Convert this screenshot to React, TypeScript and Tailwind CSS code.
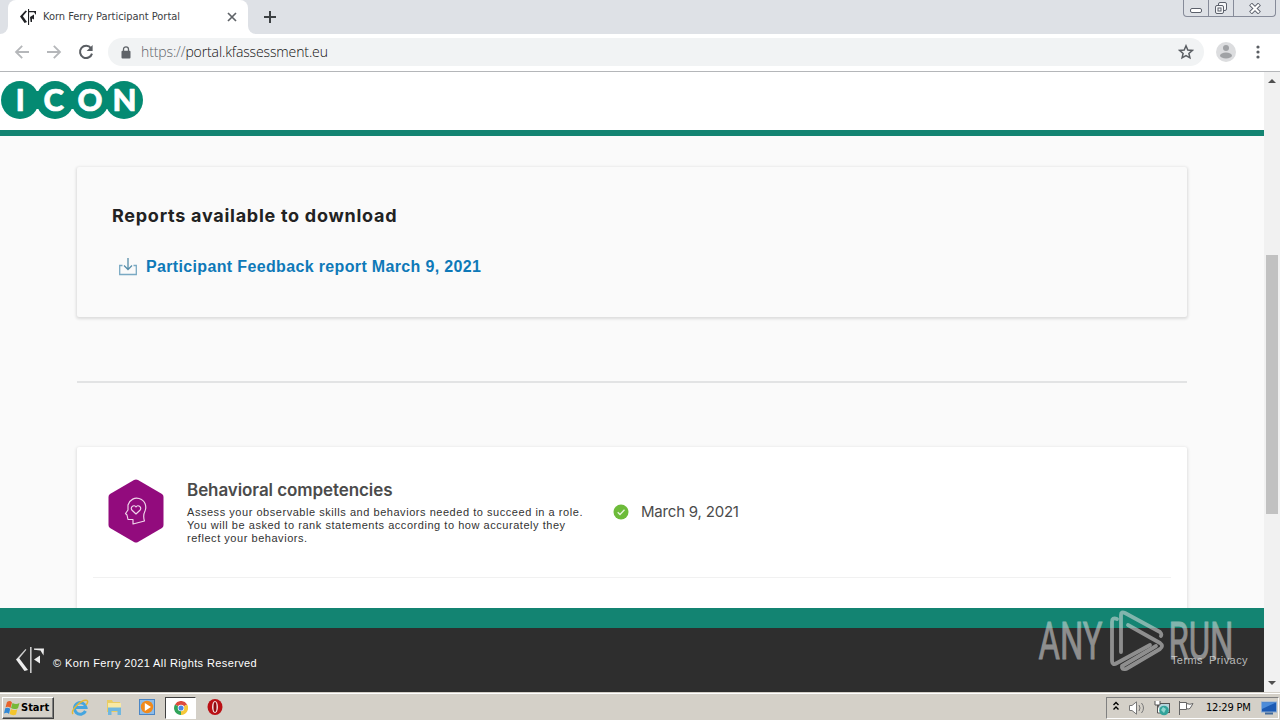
import React from "react";

const KfMark = ({ className, color }: { className: string; color: string }) => (
  <svg viewBox="0 0 28 26" className={className} fill={color}>
    <path d="M0 12.5 L3 11 L12 23 L8.5 24 Z" />
    <path d="M0 12.5 L9.5 2 L10.4 2.8 L2.4 12.5 Z" opacity="0.85" />
    <rect x="14" y="0" width="1.6" height="26" opacity="0.8" />
    <path d="M18 1.5 H28 L27.5 8.5 L24.5 3.4 L18 2.7 Z" />
    <path d="M18 12.5 L24 8.5 V16.5 Z" />
  </svg>
);

const TabMark = () => (
  <svg viewBox="0 0 16 16" className="h-4 w-4" fill="#202124">
    <path d="M0 7.5 L2.4 6.5 L7 13 L4.6 14 Z" />
    <path d="M0 7.5 L5.5 1.5 L7 2.3 L2.2 8 Z" />
    <rect x="8" y="0" width="1.1" height="16" />
    <path d="M9 2 H16 V6 L14 3.2 H9 Z" />
    <path d="M10 8 L14 5.5 V10.5 L12 9.5 V13 H10.6 Z" />
  </svg>
);

const TabStrip = () => (
  <div className="relative flex h-[34px] bg-[#dee1e6] pl-2">
    <div className="absolute bottom-0 left-0 h-2 w-2 bg-white">
      <div className="h-2 w-2 rounded-br-lg bg-[#dee1e6]" />
    </div>
    <div className="flex h-[34px] w-60 items-center rounded-t-lg bg-white pl-3 pr-[10px]">
      <TabMark />
      <span className="ml-[7px] mt-px flex-1 whitespace-nowrap font-['DejaVu_Sans_Condensed','DejaVu_Sans',sans-serif] text-[11px] tracking-[-0.03px] text-[#3c4043]">
        Korn Ferry Participant Portal
      </span>
      <svg viewBox="0 0 12 12" className="h-3 w-3" stroke="#5f6368" strokeWidth="1.7">
        <path d="M2 2 L10 10 M10 2 L2 10" />
      </svg>
    </div>
    <div className="mt-[26px] h-2 w-2 bg-white">
      <div className="h-2 w-2 rounded-bl-lg bg-[#dee1e6]" />
    </div>
    <svg viewBox="0 0 14 14" className="ml-[7px] mt-[10px] h-[14px] w-[14px]" stroke="#3c4043" strokeWidth="2">
      <path d="M7 1 V13 M1 7 H13" />
    </svg>
    <div className="ml-auto mr-1 flex h-[17px] w-[93px] rounded-b-[4px] border border-t-0 border-[#868b99]">
      <div className="flex w-[25px] items-end justify-center border-r border-[#868b99] pb-[3px]">
        <div className="h-[5px] w-3 rounded-[2px] border border-[#5b606b] bg-white" />
      </div>
      <div className="flex w-[25px] justify-center border-r border-[#868b99] pt-[2px]">
        <svg viewBox="0 0 14 13" className="h-[13px] w-[14px]" fill="#f6f7f9" stroke="#5b606b">
          <rect x="4.5" y="0.5" width="8" height="8" rx="1.5" />
          <rect x="1.5" y="3.5" width="8" height="8" rx="1.5" />
          <rect x="4" y="6" width="3" height="3" />
        </svg>
      </div>
      <div className="flex flex-1 justify-center pt-[3px]">
        <svg viewBox="0 0 12 11" className="h-[11px] w-3">
          <path d="M1.5 1 L10.5 10 M10.5 1 L1.5 10" stroke="#5b606b" strokeWidth="4" />
          <path d="M2 1.5 L10 9.5 M10 1.5 L2 9.5" stroke="#fff" strokeWidth="2.2" />
        </svg>
      </div>
    </div>
  </div>
);

const Toolbar = () => (
  <div className="flex h-[38px] items-center border-b border-[#b4b6b9] bg-white pb-px pl-[14px] pr-3">
    <svg viewBox="0 0 16 16" className="h-4 w-4" fill="none" stroke="#b5b7ba" strokeWidth="1.8">
      <path d="M15 8 H2 M8.2 1.8 L2 8 L8.2 14.2" />
    </svg>
    <svg viewBox="0 0 16 16" className="ml-4 h-4 w-4" fill="none" stroke="#b5b7ba" strokeWidth="1.8">
      <path d="M1 8 H14 M7.8 1.8 L14 8 L7.8 14.2" />
    </svg>
    <svg viewBox="0 0 16 16" className="ml-4 h-4 w-4" fill="none" stroke="#5a5e63" strokeWidth="2">
      <path d="M13 4.2 A6.1 6.1 0 1 0 14 9.6" />
      <path d="M14.6 1 V7 H8.6 Z" fill="#5a5e63" stroke="none" />
    </svg>
    <div className="ml-[14px] flex h-7 w-[1096px] items-center rounded-full bg-[#f1f3f4] pl-[13px] pr-[10px]">
      <svg viewBox="0 0 10 13" className="h-[13px] w-[10px]" fill="#5f6368">
        <rect x="0.5" y="4.7" width="9" height="7.8" rx="1" />
        <path d="M2.5 5 V3.3 A2.5 2.5 0 0 1 7.5 3.3 V5" fill="none" stroke="#5f6368" strokeWidth="1.3" />
      </svg>
      <span className="ml-[10px] flex-1 font-['Open_Sans',sans-serif] text-sm font-light tracking-[-0.12px] text-[#111]">
        <span className="text-[#5f6368]">https://</span>
        portal.kfassessment.eu
      </span>
      <svg viewBox="0 0 16 16" className="h-4 w-4" fill="none" stroke="#5a5e63" strokeWidth="1.5">
        <path d="M8 1.8 L9.8 6 L14.3 6.4 L10.9 9.4 L11.9 13.8 L8 11.5 L4.1 13.8 L5.1 9.4 L1.7 6.4 L6.2 6 Z" />
      </svg>
    </div>
    <svg viewBox="0 0 20 20" className="ml-3 h-5 w-5">
      <circle cx="10" cy="10" r="10" fill="#dcdddf" />
      <circle cx="10" cy="6" r="3" fill="#a0a2a5" />
      <ellipse cx="10" cy="13.5" rx="6" ry="3" fill="#a0a2a5" />
    </svg>
    <svg viewBox="0 0 4 16" className="ml-5 h-4 w-1" fill="#5a5e63">
      <circle cx="2" cy="3" r="1.6" />
      <circle cx="2" cy="8" r="1.6" />
      <circle cx="2" cy="13" r="1.6" />
    </svg>
  </div>
);

const IconLogo = () => (
  <svg viewBox="0 0 144 40" className="h-10 w-36">
    <g fill="#048a72">
      <circle cx="20" cy="20" r="19" />
      <circle cx="55" cy="20" r="19" />
      <circle cx="90" cy="20" r="19" />
      <circle cx="124" cy="20" r="19" />
      <rect x="33" y="11" width="9" height="18" />
      <rect x="68" y="11" width="9" height="18" />
      <rect x="103" y="11" width="9" height="18" />
    </g>
    <g
      fill="#fff"
      stroke="#fff"
      strokeWidth="0.7"
      strokeLinejoin="round"
      fontFamily="Lato, sans-serif"
      fontWeight="900"
      fontSize="29.5"
    >
      <text x="15.8" y="30.5">I</text>
      <text x="43.5" y="30.5" textLength="20.5" lengthAdjust="spacingAndGlyphs">C</text>
      <text x="77.5" y="30.5" textLength="25" lengthAdjust="spacingAndGlyphs">O</text>
      <text x="112.5" y="30.5" textLength="24" lengthAdjust="spacingAndGlyphs">N</text>
    </g>
  </svg>
);

const Reports = () => (
  <section className="h-[150px] rounded-[2px] bg-[#fafafa] pl-[35px] pt-[35px] shadow-[0_1px_3px_1px_rgba(0,0,0,0.12)]">
    <h2 className="whitespace-nowrap font-[Inter,sans-serif] text-lg leading-7 font-bold tracking-[0.73px] text-[#222]">
      Reports available to download
    </h2>
    <a className="mt-[23px] flex h-7 items-center pl-[7px] text-[#0e79b8]">
      <svg viewBox="0 0 18 18" className="h-[18px] w-[18px]" fill="none" stroke="#79a9c3" strokeWidth="1.3">
        <path d="M3.5 7.5 H0.7 V16.5 H17.3 V7.5 H14.5" />
        <path d="M9 0 V11.5 M5 7.5 L9 11.5 L13 7.5" stroke="#568da9" />
      </svg>
      <span className="ml-[9px] whitespace-nowrap text-base font-bold tracking-[0.35px]">
        Participant Feedback report March 9, 2021
      </span>
    </a>
  </section>
);

const Competencies = () => (
  <section className="h-[220px] rounded-[2px] bg-white px-4 shadow-[0_1px_3px_1px_rgba(0,0,0,0.1)]">
    <div className="flex h-[131px] border-b border-[#f1f1f1] pl-[15px] pt-8">
      <svg viewBox="0 0 56 64" className="h-16 w-14">
        <path
          d="M26 1 Q28 0 30 1 L54 15 Q55.5 16 55.5 18 V46 Q55.5 48 54 49 L30 63 Q28 64 26 63 L2 49 Q0.5 48 0.5 46 V18 Q0.5 16 2 15 Z"
          fill="#920b7d"
        />
        <g fill="none" stroke="#f0d6eb" strokeWidth="1.15" strokeLinejoin="round">
          <path d="M20 26 C22 20 27 18.5 31 19.5 C37 21 39 27 37 32 C35 36 35.5 39 36.5 42 L25 45 V40.5 H20 L19 36 L17.5 34.5 L20 31 Z" />
          <path d="M28 35 L23.8 31 C22 28 26 25 28 28 C30 25 34 28 32.2 31 Z" />
        </g>
      </svg>
      <div className="-mt-px ml-[23px] w-[426px]">
        <h3 className="whitespace-nowrap font-[Inter,sans-serif] text-[17px] leading-6 font-semibold tracking-[-0.08px] text-[#4b4b4b]">
          Behavioral competencies
        </h3>
        <p className="mt-1 whitespace-nowrap text-[11px] leading-[13px] tracking-[0.54px] text-[#333]">
          Assess your observable skills and behaviors needed to succeed in a role.
          <br />
          You will be asked to rank statements according to how accurately they
          <br />
          reflect your behaviors.
        </p>
      </div>
      <svg viewBox="0 0 16 16" className="mt-[25px] h-4 w-4">
        <circle cx="8" cy="8" r="7.5" fill="#6dbb3a" />
        <path d="M4.7 8.2 L7 10.5 L11.5 5.8" fill="none" stroke="#e7f5df" strokeWidth="1.3" />
      </svg>
      <span className="ml-3 mt-[21px] whitespace-nowrap font-[Inter,sans-serif] text-[15px] leading-6 tracking-[-0.2px] text-[#4b4b4b]">
        March 9, 2021
      </span>
    </div>
  </section>
);

const Scrollbar = () => (
  <div className="flex w-4 flex-col items-center bg-[#f1f1f1]">
    <svg viewBox="0 0 16 16" className="h-4 w-4" fill="#505050">
      <path d="M4 11 L8 7 L12 11 Z" />
    </svg>
    <div className="mt-[167px] h-[259px] w-3 bg-[#c1c1c1]" />
    <svg viewBox="0 0 16 16" className="mt-auto h-4 w-4" fill="#505050">
      <path d="M4 5 L8 9 L12 5 Z" />
    </svg>
  </div>
);

const Watermark = () => (
  <svg viewBox="0 0 200 62" className="absolute left-[1038px] top-[610px] h-[62px] w-[200px]" opacity="0.55">
    <g fill="#dedede" stroke="#dedede" strokeWidth="0.9" fontFamily="Roboto, sans-serif" fontSize="52">
      <text x="0.5" y="49" textLength="64" lengthAdjust="spacingAndGlyphs">ANY</text>
      <text x="130.5" y="49" textLength="65" lengthAdjust="spacingAndGlyphs">RUN</text>
    </g>
    <g fill="none" stroke="#dedede" strokeWidth="3.8" strokeLinecap="round" strokeLinejoin="round">
      <path d="M79 9 Q74 7 74 12 V50 Q74 56 79 53 L112 35" />
      <path d="M83 42 V5 Q83 1 87 3 L122 22 Q124 24 123 26" />
      <path d="M90 15 L122 33 Q126 36 122 39 L88 59 Q83 60 84 56 L118 36" />
    </g>
  </svg>
);

const Taskbar = () => (
  <div className="flex h-7 items-center border-t border-[#d4d0c8] bg-[#d4d0c8] pl-[2px] pr-px shadow-[inset_0_1px_0_#fff]">
    <div className="mt-[2px] flex h-[22px] w-[52px] items-center border border-b-[#404040] border-l-white border-r-[#404040] border-t-white pl-px shadow-[inset_-1px_-1px_0_#808080]">
      <svg viewBox="0 0 16 16" className="h-4 w-4">
        <path d="M3 2 Q6 0 8 2.5 L6.5 8 Q4 6 1.5 7.5 Z" fill="#e7622b" />
        <path d="M8.5 3 Q12 5 15.5 3 L14 8.2 Q10 10 7 8 Z" fill="#76b938" />
        <path d="M1.2 8.2 Q4 7 6.2 8.8 L5 14 Q3 12 0 13.5 Z" fill="#3288d5" />
        <path d="M6.9 9 Q10 11 13.3 9.2 L12 14.5 Q9 16 5.6 14 Z" fill="#f4c52d" />
      </svg>
      <span className="ml-px mt-px font-['DejaVu_Sans_Condensed','DejaVu_Sans',sans-serif] text-[11px] font-bold text-black">
        Start
      </span>
    </div>
    <svg viewBox="0 0 18 18" className="ml-[17px] mt-px h-[18px] w-[18px]" fill="none">
      <path d="M14.5 13 A5.8 5.8 0 1 1 15 9.5 H5" stroke="#45a5df" strokeWidth="3" />
      <path d="M2 16 C-1 12 11 1 16 2.5 C17.5 3.5 16 6 15 7" stroke="#e5b935" strokeWidth="1.5" />
    </svg>
    <svg viewBox="0 0 18 18" className="ml-4 mt-px h-[18px] w-[18px]">
      <path d="M2 2 H7 L8 4 H15 V14 H2 Z" fill="#e9cc63" />
      <path d="M3 5 H16 V11 H3 Z" fill="#f8e9a4" />
      <path d="M3 9.5 H16 V17 H12.5 V13 H6.5 V17 H3 Z" fill="#70b7df" />
    </svg>
    <svg viewBox="0 0 16 16" className="ml-4 mt-px h-4 w-4">
      <rect x="0.5" y="0.5" width="15" height="15" fill="#8dbce9" stroke="#4b86c5" />
      <circle cx="8" cy="8" r="6.2" fill="#f18a1c" />
      <path d="M5.8 4 L12 8 L5.8 12 Z" fill="#fff" />
    </svg>
    <div className="ml-[10px] mt-[2px] flex h-[22px] w-[31px] items-center justify-center border border-b-white border-l-[#404040] border-r-white border-t-[#404040] bg-white">
      <svg viewBox="0 0 16 16" className="h-[14px] w-[14px]">
        <path d="M8 8 L1.1 4 A8 8 0 0 1 15 4 Z" fill="#dd4b3e" />
        <path d="M8 8 L15 4 A8 8 0 0 1 8 16 Z" fill="#f5c83a" />
        <path d="M8 8 L8 16 A8 8 0 0 1 1.1 4 Z" fill="#31a45a" />
        <circle cx="8" cy="8" r="3.7" fill="#fff" />
        <circle cx="8" cy="8" r="2.9" fill="#4a86e8" />
      </svg>
    </div>
    <svg viewBox="0 0 16 16" className="ml-[11px] mt-px h-4 w-4">
      <ellipse cx="8" cy="8" rx="7.5" ry="8" fill="#ba1015" />
      <ellipse cx="8" cy="8" rx="3" ry="6" fill="#f3dddd" />
      <ellipse cx="8" cy="8" rx="1.5" ry="5" fill="#8f0b10" />
    </svg>
    <div className="ml-auto mt-[2px] flex h-[22px] w-[173px] items-center border border-b-white border-l-[#808080] border-r-white border-t-[#808080] pl-[5px]">
      <svg viewBox="0 0 8 10" className="mb-1 h-[10px] w-2" fill="none" stroke="#000" strokeWidth="1.4">
        <path d="M1.5 4 L4 1.5 L6.5 4 M1.5 8.5 L4 6 L6.5 8.5" />
      </svg>
      <svg viewBox="0 0 16 14" className="ml-[9px] h-[14px] w-4" fill="#fff" stroke="#777">
        <path d="M0.5 4.5 H3 L7.5 0.8 V13.2 L3 9.5 H0.5 Z" />
        <path d="M10 4 Q12 7 10 10 M12.5 2 Q16.5 7 12.5 12" fill="none" />
      </svg>
      <svg viewBox="0 0 16 16" className="ml-[9px] h-4 w-4">
        <rect x="4.5" y="3.5" width="11" height="9" fill="#b6d6dc" stroke="#555" />
        <path d="M1 1 V5 H6 V1 M3.5 5 V13 H7" fill="#fff" stroke="#555" />
        <circle cx="10" cy="10.5" r="4.8" fill="#32a39a" />
        <path d="M7 10 L9 7 L12 9 L10 13 Z" fill="#91d6cf" />
      </svg>
      <svg viewBox="0 0 16 14" className="ml-2 h-[14px] w-4" fill="#fff" stroke="#666">
        <path d="M1.5 0 V14 M2 1.5 H8.5 V8.5 H2 M8.5 2.5 Q12 4 15 2.5 L12 7.5 Q10 8.5 8.5 7.5" />
      </svg>
      <span className="ml-[12px] mt-px w-[51px] whitespace-nowrap font-['DejaVu_Sans_Condensed','DejaVu_Sans',sans-serif] text-[11px] tracking-[-0.2px] text-black">
        12:29 PM
      </span>
      <svg viewBox="0 0 16 14" className="ml-1 h-[14px] w-4">
        <rect x="0.5" y="1" width="15" height="10" fill="#1c5ab3" stroke="#8cadd5" />
        <path d="M1 1.5 H15 L1 8 Z" fill="#4c8cda" />
        <rect x="4" y="11.5" width="8" height="2" fill="#426a9a" />
      </svg>
    </div>
  </div>
);

const App = () => {
  return (
    <div className="relative flex h-[720px] w-[1280px] flex-col overflow-hidden font-['Liberation_Sans',sans-serif]">
      <TabStrip />
      <Toolbar />
      <div className="flex h-[620px]">
        <div className="flex w-[1264px] flex-col">
          <header className="h-16 border-b-[6px] border-[#138472] bg-white pt-2">
            <IconLogo />
          </header>
          <main className="h-[472px] overflow-hidden bg-[#fafafa] px-[77px] pt-[31px]">
            <Reports />
            <hr className="mb-16 mt-16 border-t-2 border-[#e2e3e4]" />
            <Competencies />
          </main>
          <footer className="flex h-[84px] items-start border-t-[20px] border-[#138472] bg-[#2e2e2e] pl-4 pr-4 text-[11px]">
            <KfMark className="mt-[19px] h-[26px] w-7" color="#ededed" />
            <span className="ml-[9px] mt-[27px] whitespace-nowrap tracking-[0.39px] text-white">
              © Korn Ferry 2021 All Rights Reserved
            </span>
            <span className="ml-auto mt-6 flex gap-[6px] tracking-[0.42px] text-[#b9b9b9]">
              <a>Terms</a>
              <a>Privacy</a>
            </span>
          </footer>
        </div>
        <Scrollbar />
      </div>
      <Taskbar />
      <Watermark />
    </div>
  );
};

export default App;
